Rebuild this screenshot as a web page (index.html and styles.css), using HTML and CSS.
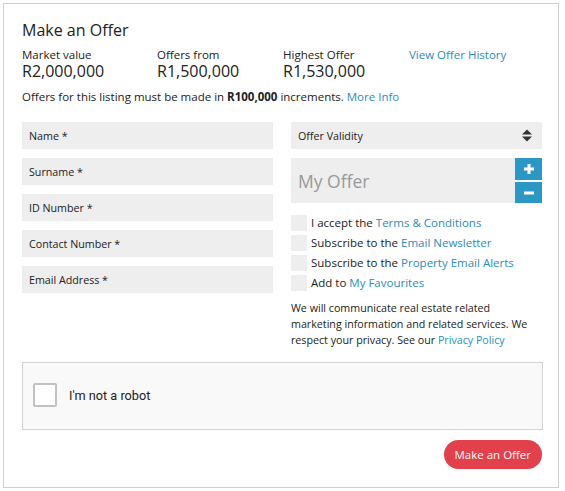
FILE: index.html
```html
<!DOCTYPE html>
<html lang="en">
<head>
    <meta charset="UTF-8">
    <title>Make an Offer</title>
    <link rel="stylesheet" href="styles.css">
</head>
<body>
    <div class="offer-box">
        <h2 class="offer-title">Make an Offer</h2>
        <div class="stats">
            <div class="stat">
                <span class="stat-label">Market value</span>
                <span class="stat-value">R2,000,000</span>
            </div>
            <div class="stat stat-narrow">
                <span class="stat-label">Offers from</span>
                <span class="stat-value">R1,500,000</span>
            </div>
            <div class="stat stat-narrow">
                <span class="stat-label">Highest Offer</span>
                <span class="stat-value">R1,530,000</span>
            </div>
            <a href="#" class="link history-link">View Offer History</a>
        </div>
        <p class="increments">Offers for this listing must be made in <b>R100,000</b> increments. <a href="#" class="link">More Info</a></p>

        <div class="form-cols">
            <div class="col">
                <input type="text" class="field" placeholder="Name *">
                <input type="text" class="field" placeholder="Surname *">
                <input type="text" class="field" placeholder="ID Number *">
                <input type="text" class="field" placeholder="Contact Number *">
                <input type="text" class="field" placeholder="Email Address *">
            </div>
            <div class="col">
                <div class="field select-field">
                    <span>Offer Validity</span>
                    <svg class="sort-icon" width="10" height="13" viewBox="0 0 10 13">
                        <polygon points="0,5.5 5,0.5 10,5.5" fill="#333"/>
                        <polygon points="0,7.5 5,12.5 10,7.5" fill="#333"/>
                    </svg>
                </div>
                <div class="offer-row">
                    <input type="text" class="offer-input" placeholder="My Offer">
                    <div class="stepper">
                        <button class="step-btn step-up">
                            <svg width="10" height="10" viewBox="0 0 10 10"><path d="M5 0v10M0 5h10" stroke="#fff" stroke-width="3"/></svg>
                        </button>
                        <button class="step-btn">
                            <svg width="10" height="10" viewBox="0 0 10 10"><path d="M0 5h10" stroke="#fff" stroke-width="3"/></svg>
                        </button>
                    </div>
                </div>
                <ul class="checks">
                    <li><span class="check"></span>I accept the <a href="#" class="link">Terms &amp; Conditions</a></li>
                    <li><span class="check"></span>Subscribe to the <a href="#" class="link">Email Newsletter</a></li>
                    <li><span class="check"></span>Subscribe to the <a href="#" class="link">Property Email Alerts</a></li>
                    <li><span class="check"></span>Add to <a href="#" class="link">My Favourites</a></li>
                </ul>
                <p class="privacy">We will communicate real estate related marketing information and related services. We respect your privacy. See our <a href="#" class="link">Privacy Policy</a></p>
            </div>
        </div>

        <div class="captcha">
            <span class="captcha-box"></span>
            <span class="captcha-text">I'm not a robot</span>
        </div>

        <div class="actions">
            <button class="submit-btn">Make an Offer</button>
        </div>
    </div>
</body>
</html>
```

FILE: styles.css
```css
body {
    font-family: "Open Sans", Arial, sans-serif;
    color: #222;
    margin: 0;
    padding: 3px;
}
.offer-box {
    width: 556px;
    box-sizing: border-box;
    border: 1px solid #cfcfcf;
    padding: 16px 15px 18px 18px;
}
.offer-title {
    font-size: 16px;
    font-weight: normal;
    line-height: 20px;
    margin: 0 0 8px;
}
.stats {
    display: flex;
    align-items: flex-start;
}
.stat {
    display: flex;
    flex-direction: column;
    width: 135px;
}
.stat-narrow {
    width: 126px;
}
.stat-label {
    font-size: 11.5px;
    line-height: 14px;
}
.stat-value {
    font-size: 16px;
    line-height: 17px;
    margin-top: 1px;
}
.link {
    color: #2a8dc0;
    text-decoration: none;
}
.history-link {
    font-size: 11.5px;
    line-height: 14px;
}
.increments {
    font-size: 11.5px;
    line-height: 16px;
    margin: 9px 0 17px;
}
.form-cols {
    display: grid;
    grid-template-columns: 251px 251px;
    gap: 18px;
}
.col {
    display: flex;
    flex-direction: column;
    min-width: 0;
}
.field {
    height: 27px;
    box-sizing: border-box;
    border: none;
    background-color: #eeeeee;
    padding: 0 7px;
    font-family: inherit;
    font-size: 10.7px;
    color: #222;
    margin-bottom: 9px;
    outline: none;
}
.field::placeholder {
    color: #222;
}
.select-field {
    display: flex;
    align-items: center;
    justify-content: space-between;
    padding-right: 10px;
}
.offer-row {
    display: flex;
    height: 45px;
}
.offer-input {
    flex: 1;
    min-width: 0;
    border: none;
    background-color: #eeeeee;
    padding: 0 7px;
    font-family: inherit;
    font-size: 17.5px;
    outline: none;
}
.offer-input::placeholder {
    color: #999;
}
.stepper {
    width: 27px;
    display: flex;
    flex-direction: column;
    gap: 2px;
}
.step-btn {
    flex: 1;
    border: none;
    padding: 0;
    background-color: #2b97c4;
    display: flex;
    align-items: center;
    justify-content: center;
    cursor: pointer;
}
.step-up {
    flex: 0 0 22px;
}
.checks {
    list-style: none;
    margin: 10px 0 0;
    padding: 0;
    font-size: 11.5px;
    line-height: 20px;
}
.checks li {
    display: flex;
    align-items: center;
    white-space: pre;
}
.check {
    width: 16px;
    height: 16px;
    background-color: #eeeeee;
    margin-right: 4px;
}
.privacy {
    font-size: 10.7px;
    line-height: 16px;
    margin: 7px 0 0;
}
.captcha {
    margin-top: 14px;
    width: 521px;
    height: 68px;
    box-sizing: border-box;
    border: 1px solid #d3d3d3;
    background-color: #f9f9f9;
    display: flex;
    align-items: center;
    padding: 0 0 2px 10px;
}
.captcha-box {
    width: 24px;
    height: 24px;
    box-sizing: border-box;
    background-color: #fff;
    border: 2px solid #c1c1c1;
    border-radius: 2px;
}
.captcha-text {
    font-family: Roboto, Arial, sans-serif;
    font-size: 12.7px;
    margin-left: 12px;
}
.actions {
    display: flex;
    justify-content: flex-end;
    width: 520px;
    margin-top: 10px;
}
.submit-btn {
    height: 29px;
    border: none;
    border-radius: 15px;
    background-color: #e2404a;
    color: #fff;
    font-family: inherit;
    font-size: 11.5px;
    padding: 0 11px;
    cursor: pointer;
}
```
